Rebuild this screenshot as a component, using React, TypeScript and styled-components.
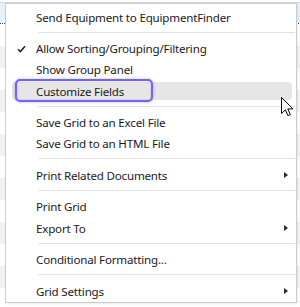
import React from 'react';
import styled, { createGlobalStyle } from 'styled-components';

const GlobalStyle = createGlobalStyle`
  html, body {
    margin: 0;
    padding: 0;
    background: #ffffff;
  }
  body {
    font-family: 'Noto Sans', 'Open Sans', sans-serif;
  }
`;

const Page = styled.div`
  position: relative;
  width: 300px;
  height: 307px;
  box-sizing: border-box;
  padding: 3px 3px 0 5px;
  overflow: hidden;
  background:
    linear-gradient(#d6d6d6, #d6d6d6) 0 2px / 100% 1px no-repeat,
    linear-gradient(to right, #444 50%, transparent 50%) 0 23px / 2px 1px repeat-x,
    linear-gradient(#e5f1fb, #e5f1fb) 0 3px / 100% 20px no-repeat,
    repeating-linear-gradient(to bottom, #ffffff 0 22px, #f2f2f2 22px 44px) 0 24px / 100% 100% no-repeat,
    #ffffff;
`;

const Menu = styled.div`
  width: 292px;
  height: 300px;
  box-sizing: border-box;
  border: 1px solid #cccccc;
  background: #ffffff;
  padding-top: 2.4px;
  display: flex;
  flex-direction: column;
  box-shadow: 1px 1px 2px rgba(0, 0, 0, 0.08);
`;

const Item = styled.div<{ $active?: boolean }>`
  position: relative;
  height: 21.25px;
  flex: none;
  display: flex;
  align-items: center;
  padding-right: 8px;
  font-size: 11.6px;
  letter-spacing: -0.2px;
  color: #1a1a1a;
  white-space: nowrap;

  &::before {
    content: '';
    display: ${(p) => (p.$active ? 'block' : 'none')};
    position: absolute;
    left: 6px;
    right: 4px;
    top: 2px;
    bottom: 2px;
    border-radius: 4px;
    background: #e6e6e6;
  }
`;

const Gutter = styled.span`
  position: relative;
  width: 30px;
  flex: none;
  display: flex;
  align-items: center;
  justify-content: center;
`;

const Label = styled.span`
  position: relative;
`;

const SubArrow = styled.span`
  position: relative;
  margin-left: auto;
  width: 0;
  height: 0;
  border-left: 4px solid #2a2a2a;
  border-top: 3.5px solid transparent;
  border-bottom: 3.5px solid transparent;
`;

const Separator = styled.div`
  flex: none;
  height: 1px;
  margin: 4px 1px 5.25px 32px;
  background: #e3e3e3;
`;

const FocusRing = styled.span`
  position: absolute;
  left: 9px;
  top: -1px;
  width: 138px;
  height: 23px;
  box-sizing: border-box;
  border: 2px solid #7465ef;
  border-radius: 5px;
  box-shadow: 0 0 3px rgba(116, 101, 239, 0.55), inset 0 0 2px rgba(116, 101, 239, 0.4);
`;

const Cursor = styled.svg`
  position: absolute;
  left: 281px;
  top: 97px;
`;

const CheckMark = () => (
  <svg width="9" height="8" viewBox="0 0 9 8">
    <path d="M1 4.2 L3.4 6.6 L8 1.2" fill="none" stroke="#222" strokeWidth="1.6" />
  </svg>
);

type Entry =
  | { kind: 'item'; label: string; checked?: boolean; sub?: boolean; active?: boolean }
  | { kind: 'sep' };

const entries: Entry[] = [
  { kind: 'item', label: 'Send Equipment to EquipmentFinder' },
  { kind: 'sep' },
  { kind: 'item', label: 'Allow Sorting/Grouping/Filtering', checked: true },
  { kind: 'item', label: 'Show Group Panel' },
  { kind: 'item', label: 'Customize Fields', active: true },
  { kind: 'sep' },
  { kind: 'item', label: 'Save Grid to an Excel File' },
  { kind: 'item', label: 'Save Grid to an HTML File' },
  { kind: 'sep' },
  { kind: 'item', label: 'Print Related Documents', sub: true },
  { kind: 'sep' },
  { kind: 'item', label: 'Print Grid' },
  { kind: 'item', label: 'Export To', sub: true },
  { kind: 'sep' },
  { kind: 'item', label: 'Conditional Formatting...' },
  { kind: 'sep' },
  { kind: 'item', label: 'Grid Settings', sub: true },
];

const App: React.FC = () => {
  return (
    <>
      <GlobalStyle />
      <Page>
        <Menu>
          {entries.map((e, i) =>
            e.kind === 'sep' ? (
              <Separator key={i} />
            ) : (
              <Item key={i} $active={e.active}>
                <Gutter>{e.checked && <CheckMark />}</Gutter>
                <Label>{e.label}</Label>
                {e.sub && <SubArrow />}
                {e.active && <FocusRing />}
              </Item>
            )
          )}
        </Menu>
        <Cursor width="13" height="20" viewBox="0 0 13 20">
          <path
            d="M0.5 0.5 L0.5 16.5 L4.4 12.8 L6.9 18.6 L9.3 17.6 L6.8 11.9 L12 11.9 Z"
            fill="#ffffff"
            stroke="#000000"
            strokeWidth="1"
            strokeLinejoin="miter"
          />
        </Cursor>
      </Page>
    </>
  );
};

export default App;
